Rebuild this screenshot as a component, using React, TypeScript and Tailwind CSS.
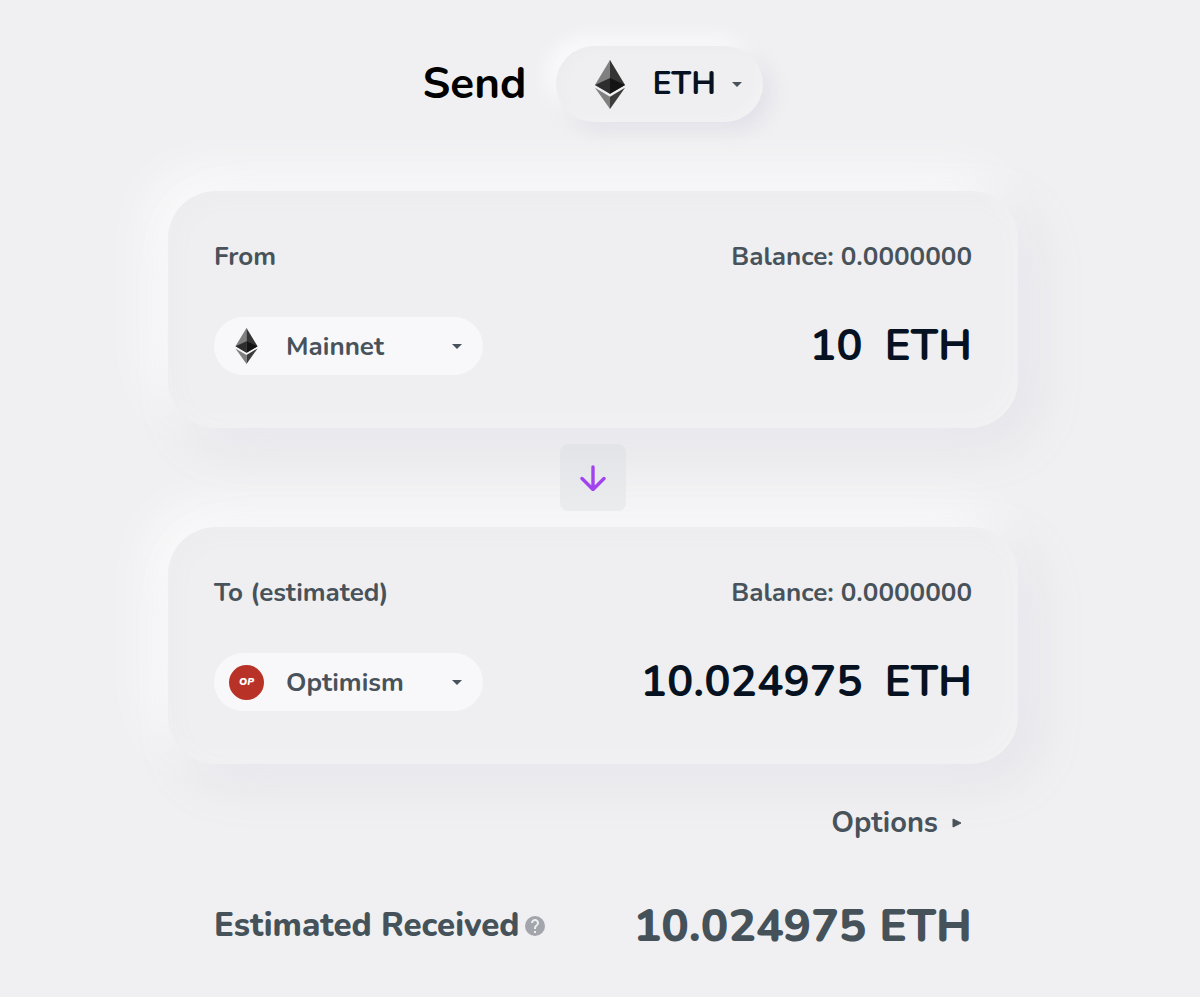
import { useState } from "react";

const networks = ["Mainnet", "Optimism", "Arbitrum", "Polygon", "Gnosis"];

function EthIcon({ className }: { className?: string }) {
  return (
    <svg viewBox="0 0 256 417" className={className} aria-hidden="true">
      <path fill="#343434" d="M128 0l-3 9.500v275.600l3 2.800 128-75.600z" />
      <path fill="#808080" d="M128 0L0 212.300l128 75.600V154.100z" />
      <path fill="#3c3c3b" d="M128 312.200l-1.600 1.900v98.200l1.600 4.600L256 236.600z" />
      <path fill="#808080" d="M128 416.900v-104.700L0 236.600z" />
      <path fill="#141414" d="M128 287.900l128-75.600-128-58.200z" />
      <path fill="#2e2e2e" d="M0 212.300l128 75.600V154.100z" />
    </svg>
  );
}

function OptimismIcon() {
  return (
    <span className="flex size-[35px] items-center justify-center rounded-full bg-[#b83227] text-[10px] leading-none font-black text-white italic">
      OP
    </span>
  );
}

function Caret() {
  return (
    <svg
      viewBox="0 0 10 5"
      className="pointer-events-none h-[5px] w-[10px] shrink-0 fill-[#48525a]"
      aria-hidden="true"
    >
      <path d="M0 0h10L5 5z" />
    </svg>
  );
}

type NetworkCardProps = {
  id: string;
  label: string;
  network: string;
  onNetworkChange: (network: string) => void;
  amount: string;
  onAmountChange?: (amount: string) => void;
};

function NetworkCard({
  id,
  label,
  network,
  onNetworkChange,
  amount,
  onAmountChange,
}: NetworkCardProps) {
  return (
    <section className="rounded-[48px] bg-[#efeff1] px-[46px] pt-[49px] pb-[53px] shadow-[16px_16px_50px_rgba(174,170,200,0.18),-16px_-16px_50px_rgba(255,255,255,0.85),inset_6px_6px_24px_rgba(174,174,192,0.03),inset_-6px_-6px_24px_rgba(255,255,255,0.25)]">
      <div className="flex items-center justify-between text-[26px] leading-[34px] font-bold text-[#48525a]">
        <label htmlFor={`${id}-network`}>{label}</label>
        <span>Balance: 0.0000000</span>
      </div>
      <div className="mt-[43px] flex h-[58px] items-center justify-between">
        <div className="flex h-full w-[269px] shrink-0 items-center rounded-full bg-[#f8f8fa] pr-[21px] pl-[15px]">
          <span className="flex w-[35px] shrink-0 justify-center">
            {network === "Optimism" ? (
              <OptimismIcon />
            ) : (
              <EthIcon className="h-9 w-[23px]" />
            )}
          </span>
          <select
            id={`${id}-network`}
            value={network}
            onChange={(e) => onNetworkChange(e.target.value)}
            className="ml-[22px] h-full min-w-0 flex-1 appearance-none bg-transparent text-[26px] font-bold text-[#48525a] outline-none"
          >
            {networks.map((name) => (
              <option key={name}>{name}</option>
            ))}
          </select>
          <Caret />
        </div>
        <div className="flex min-w-0 flex-1 items-center justify-end gap-[22px] text-[44px] leading-[56px] font-bold text-[#061222]">
          <input
            aria-label={`${label} amount`}
            value={amount}
            readOnly={!onAmountChange}
            onChange={(e) => onAmountChange?.(e.target.value)}
            className="w-full min-w-0 bg-transparent text-right outline-none"
          />
          <span>ETH</span>
        </div>
      </div>
    </section>
  );
}

export default function App() {
  const [token, setToken] = useState("ETH");
  const [from, setFrom] = useState("Mainnet");
  const [to, setTo] = useState("Optimism");
  const [amount, setAmount] = useState("10");

  const swap = () => {
    setFrom(to);
    setTo(from);
  };

  return (
    <div className="min-h-screen bg-[#f0f0f2] pr-3.5 font-[Nunito,Lato,sans-serif]">
      <main className="mx-auto max-w-[850px] pt-[46px] pb-10">
        <header className="mb-[69px] flex items-center justify-center gap-[30px]">
          <h1 className="text-[44px] leading-[56px] font-bold text-black">
            Send
          </h1>
          <div className="flex h-[76px] w-[207px] items-center rounded-full bg-[#efeff1] pr-[21px] pl-[38px] shadow-[8px_8px_20px_rgba(174,170,200,0.22),-8px_-8px_20px_rgba(255,255,255,0.8),inset_4px_4px_12px_rgba(174,174,192,0.04),inset_-4px_-4px_12px_rgba(255,255,255,0.25)]">
            <EthIcon className="h-[49px] w-8 shrink-0" />
            <select
              aria-label="Token"
              value={token}
              onChange={(e) => setToken(e.target.value)}
              className="ml-[26px] h-full min-w-0 flex-1 appearance-none bg-transparent text-[32px] font-bold text-[#061222] outline-none"
            >
              <option>ETH</option>
              <option>USDC</option>
              <option>DAI</option>
            </select>
            <Caret />
          </div>
        </header>

        <NetworkCard
          id="from"
          label="From"
          network={from}
          onNetworkChange={setFrom}
          amount={amount}
          onAmountChange={setAmount}
        />

        {/* sits above the shadow of the card below */}
        <div className="relative z-10 my-4 flex justify-center">
          <button
            type="button"
            aria-label="Switch direction"
            onClick={swap}
            className="flex h-[67px] w-[66px] items-center justify-center rounded-lg bg-linear-to-b from-[#e3e4e7] to-[#ebecee]"
          >
            <svg
              viewBox="0 0 26 26"
              className="size-[26px] fill-none stroke-[#a144f0] stroke-[3.4]"
              strokeLinecap="round"
              strokeLinejoin="round"
              aria-hidden="true"
            >
              <path d="M13 2v22M2 13.500l11 11 11-11" />
            </svg>
          </button>
        </div>

        <NetworkCard
          id="to"
          label="To (estimated)"
          network={to}
          onNetworkChange={setTo}
          amount="10.024975"
        />

        <div className="mt-[41px] flex justify-end pr-14">
          <button
            type="button"
            className="flex items-center gap-3.5 text-[29px] leading-9 font-bold text-[#48525a]"
          >
            Options
            <svg
              viewBox="0 0 10 10"
              className="size-2.5 fill-[#48525a]"
              aria-hidden="true"
            >
              <path
                d="M1 1l8 4-8 4z"
                className="stroke-[#48525a] stroke-1"
                strokeLinejoin="round"
              />
            </svg>
          </button>
        </div>

        <div className="mt-14 flex items-center justify-between px-[46px] font-extrabold text-[#46525a]">
          <div className="flex items-center gap-1.5 text-[33px] leading-[58px]">
            Estimated Received
            <button type="button" aria-label="About the estimate">
              <svg viewBox="2 2 20 20" className="size-5" aria-hidden="true">
                <circle cx="12" cy="12" r="10" fill="#a3a5ad" />
                <path
                  fill="#efeff1"
                  d="M11 17h2v2h-2zM12 5c-2.210 0-4 1.790-4 4h2c0-1.100.9-2 2-2s2 .9 2 2c0 2-3 1.750-3 6h2c0-3.250 3-3.500 3-6 0-2.210-1.790-4-4-4z"
                />
              </svg>
            </button>
          </div>
          <span className="text-[46px] leading-[58px]">10.024975 ETH</span>
        </div>
      </main>
    </div>
  );
}
